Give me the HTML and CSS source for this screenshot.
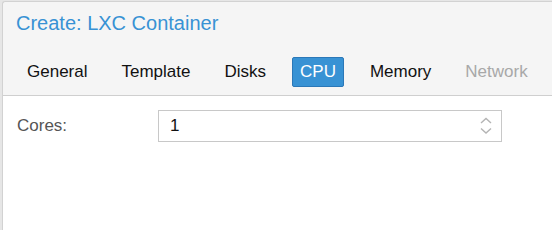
FILE: index.html
```html
<!DOCTYPE html>
<html lang="en">
<head>
  <meta charset="UTF-8" />
  <title>Create: LXC Container</title>
  <link rel="stylesheet" href="styles.css">
</head>
<body>
  <div class="window">
    <div class="title">Create: LXC Container</div>
    <div class="tabs">
      <span class="tab">General</span>
      <span class="tab">Template</span>
      <span class="tab">Disks</span>
      <span class="tab active">CPU</span>
      <span class="tab">Memory</span>
      <span class="tab disabled">Network</span>
    </div>
    <div class="panel">
      <div class="field">
        <label class="field-label">Cores:</label>
        <div class="spinner">
          <span class="spinner-value">1</span>
          <svg class="spinner-arrows" width="12" height="18" viewBox="0 0 12 18">
            <polyline points="1,6 6,1.5 11,6" fill="none" stroke="#b4b4b4" stroke-width="1.4" />
            <polyline points="1,11.5 6,16 11,11.5" fill="none" stroke="#b4b4b4" stroke-width="1.4" />
          </svg>
        </div>
      </div>
    </div>
  </div>
</body>
</html>
```

FILE: styles.css
```css
html, body {
  height: 100%;
}
body {
  margin: 0;
  background-color: #e6e6e6;
  font-family: "Liberation Sans", Arial, sans-serif;
  overflow: hidden;
}
.window {
  margin: 1px 0 0 2px;
  height: 100%;
  background-color: #f5f5f5;
  border-top: 1px solid #d2d2d2;
  border-left: 1px solid #d2d2d2;
  border-top-left-radius: 3px;
  display: flex;
  flex-direction: column;
}
.title {
  padding: 10px 0 0 13px;
  font-size: 20px;
  line-height: 23px;
  color: #3892d4;
}
.tabs {
  display: flex;
  gap: 18px;
  margin-top: 22px;
  padding-left: 16px;
}
.tab {
  padding: 0 7px;
  height: 28px;
  line-height: 28px;
  border: 1px solid transparent;
  border-radius: 2px;
  font-size: 17px;
  color: #111;
}
.tab.active {
  background-color: #3892d4;
  border-color: #2b78b8;
  color: white;
}
.tab.disabled {
  color: #a8a8a8;
}
.panel {
  flex: 1;
  margin-top: 8px;
  background-color: white;
  border-top: 1px solid #cfcfcf;
  padding: 14px 0 0 14px;
}
.field {
  display: flex;
  align-items: center;
}
.field-label {
  width: 141px;
  font-size: 17px;
  color: #555;
}
.spinner {
  box-sizing: border-box;
  width: 344px;
  height: 32px;
  border: 1px solid #c8c8c8;
  display: flex;
  align-items: center;
  justify-content: space-between;
  padding: 0 9px 0 11px;
}
.spinner-value {
  font-size: 17px;
  color: #111;
}
```
